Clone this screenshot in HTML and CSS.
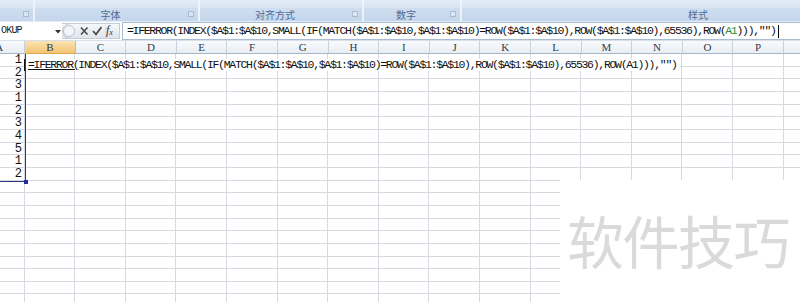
FILE: index.html
```html
<!DOCTYPE html>
<html>
<head>
<meta charset="utf-8">
<link rel="stylesheet" href="styles.css">
</head>
<body>
<div class="ribbon">
  <div class="grp g0"><div class="grp-top"></div><div class="grp-label"><i class="launch"></i></div></div>
  <div class="grp g1"><div class="grp-top"></div><div class="grp-label">字体<i class="launch"></i></div></div>
  <div class="grp g2"><div class="grp-top"></div><div class="grp-label">对齐方式<i class="launch"></i></div></div>
  <div class="grp g3"><div class="grp-top"></div><div class="grp-label">数字<i class="launch"></i></div></div>
  <div class="grp g4"><div class="grp-top"></div><div class="grp-label">样式</div></div>
</div>
<div class="fbar">
  <div class="namebox">
    <span class="nb-text">OKUP</span>
    <svg class="nb-arrow" width="6" height="4" viewBox="0 0 6 4"><path d="M0 0H6L3 3.5Z" fill="#333"/></svg>
  </div>
  <div class="fbtns">
    <svg width="44" height="18" viewBox="0 0 44 18">
      <defs><linearGradient id="pg" x1="0" y1="0" x2="0" y2="1"><stop offset="0" stop-color="#f6f8fb"/><stop offset="1" stop-color="#dfe5ed"/></linearGradient></defs>
      <path d="M8 1.5H44V16.5H8A7.5 7.5 0 0 1 8 1.5Z" fill="url(#pg)" stroke="#c3ccd8"/>
      <circle cx="7" cy="9" r="5.5" fill="#f3f5f8" stroke="#bac4d1"/>
      <path d="M19 5.5L25.5 12.5M25.5 5.5L19 12.5" stroke="#4a4a4a" stroke-width="1.6"/>
      <path d="M31 9L34 12.3L39.5 5" fill="none" stroke="#4a4a4a" stroke-width="1.7"/>
    </svg>
    <span class="fx">f<sub>x</sub></span>
  </div>
  <div class="finput"><span class="ftext">=IFERROR(INDEX($A$1:$A$10,SMALL(IF(MATCH($A$1:$A$10,$A$1:$A$10)=ROW($A$1:$A$10),ROW($A$1:$A$10),65536),ROW(<span class="ref">A1</span>))),"")</span><i class="caret"></i></div>
</div>
<div class="sheet">
  <div class="colheads">
    <div class="ch">A</div><div class="ch sel">B</div><div class="ch">C</div><div class="ch">D</div><div class="ch">E</div><div class="ch">F</div><div class="ch">G</div><div class="ch">H</div><div class="ch">I</div><div class="ch">J</div><div class="ch">K</div><div class="ch">L</div><div class="ch">M</div><div class="ch">N</div><div class="ch">O</div><div class="ch">P</div><div class="ch"></div>
  </div>
  <div class="rows">
    <div class="row"><div class="a">1</div><div class="b"><span class="ctext"><u>=IFERROR(</u>INDEX($A$1:$A$10,SMALL(IF(MATCH($A$1:$A$10,$A$1:$A$10)=ROW($A$1:$A$10),ROW($A$1:$A$10),65536),ROW(A1))),"")</span></div></div>
    <div class="row"><div class="a">2</div></div>
    <div class="row"><div class="a">3</div></div>
    <div class="row"><div class="a">1</div></div>
    <div class="row"><div class="a">2</div></div>
    <div class="row"><div class="a">3</div></div>
    <div class="row"><div class="a">4</div></div>
    <div class="row"><div class="a">5</div></div>
    <div class="row"><div class="a">1</div></div>
    <div class="row"><div class="a">2</div></div>
    <div class="row"></div>
    <div class="row"></div>
    <div class="row"></div>
    <div class="row"></div>
    <div class="row"></div>
    <div class="row"></div>
    <div class="row"></div>
    <div class="row"></div>
    <div class="row"></div>
    <div class="row"></div>
  </div>
  <div class="refbox"><i class="handle"></i></div>
</div>
<div class="watermark">软件技巧</div>
</body>
</html>
```
FILE: styles.css
```css
* { box-sizing: border-box; margin: 0; padding: 0; }
html, body { width: 800px; height: 302px; }
body {
  overflow: hidden;
  background: #fff;
  position: relative;
  font-family: "Liberation Sans", sans-serif;
}

/* ribbon */
.ribbon {
  display: flex;
  height: 22px;
  border-bottom: 1px solid #e4ebf4;
  background: #edf2f9;
  overflow: hidden;
}
.grp {
  flex: none;
  display: flex;
  flex-direction: column;
  border-right: 2px solid #eef3fa;
}
.g0 { width: 35px; }
.g1 { width: 165px; }
.g2 { width: 164px; }
.g3 { width: 98px; }
.g4 { width: 462px; border-right: 0; }
.grp-top {
  height: 8px;
  background: linear-gradient(#e3ecf8, #d8e4f3);
}
.grp-label {
  position: relative;
  height: 13px;
  padding-right: 12px;
  display: flex;
  align-items: center;
  justify-content: center;
  background: linear-gradient(#cfdef0, #c4d6ec);
  font: 10px/13px "Noto Sans CJK SC", sans-serif;
  color: #4b6b96;
}
.g4 .grp-label { padding-right: 0; padding-left: 10px; }
.launch {
  position: absolute;
  right: 4px;
  top: 3px;
  width: 6px;
  height: 6px;
  border: 1px solid #a9bcd4;
  background: #dbe6f3;
}

/* formula bar */
.fbar {
  display: flex;
  height: 19px;
  border-bottom: 1px solid #d6dfea;
  background: #fff;
}
.namebox {
  position: relative;
  width: 61px;
  flex: none;
  overflow: hidden;
  padding-left: 1px;
  font: 10px/18px "Liberation Mono", monospace;
  color: #222;
}
.nb-text { letter-spacing: -0.8px; }
.nb-arrow { position: absolute; left: 55px; top: 8px; }
.fbtns {
  position: relative;
  width: 58px;
  flex: none;
  margin-left: 1px;
  display: flex;
  align-items: center;
  background: linear-gradient(#f6f8fb, #dfe5ed);
  border-top: 1px solid #c3ccd8;
  border-bottom: 1px solid #c3ccd8;
  border-right: 1px solid #c3ccd8;
  height: 16px;
  margin-top: 1px;
  background-clip: padding-box;
}
.fbtns svg { margin-top: -1px; margin-bottom: -1px; flex: none; }
.fx {
  margin-left: 0;
  font: italic 12px/14px "Liberation Serif", serif;
  color: #333;
}
.fx sub { font-size: 8px; vertical-align: -1px; }
.finput {
  flex: 1;
  margin-left: 2px;
  border: 1px solid #a7bbd2;
  border-right: 0;
  display: flex;
  align-items: center;
  padding-left: 4px;
  white-space: nowrap;
  overflow: hidden;
}
.ftext, .ctext {
  font: 11.5px/12px "Liberation Mono", monospace;
  letter-spacing: -1.31px;
  color: #111;
}
.ref { color: #2e8b2e; }
.caret {
  width: 1px;
  height: 13px;
  background: #000;
  margin-left: 2px;
}

/* sheet */
.sheet {
  position: relative;
  margin-left: -25.6px;
  width: 860.2px;
}
.colheads {
  display: flex;
  height: 13px;
}
.ch {
  flex: none;
  width: 50.6px;
  border-right: 1px solid #c6cfdb;
  border-bottom: 1px solid #a6b6c9;
  background: linear-gradient(#f8fafc, #e9eef4);
  font: 11px/12px "Liberation Serif", serif;
  color: #2f3a48;
  text-align: center;
}
.ch.sel {
  background: linear-gradient(#fbe3b4, #f3c472);
  border-bottom-color: #e0a44a;
  border-right-color: #e3b26b;
}
.row {
  display: flex;
  height: 12.667px;
  border-bottom: 1px solid #d5dae2;
  background: repeating-linear-gradient(90deg, transparent 0 49.6px, #d5dae2 49.6px 50.6px);
}
.a {
  flex: none;
  width: 50.6px;
  padding-right: 3px;
  text-align: right;
  font: 12px/12px "Liberation Mono", monospace;
  color: #111;
}
.b {
  flex: none;
  white-space: nowrap;
  position: relative;
}
.ctext {
  display: inline-block;
  background: #fff;
  padding: 0 3px 0 2px;
  margin-left: -1px;
  border-left: 2px solid #111;
  height: 12px;
}
.ctext u { text-decoration-thickness: 1px; text-underline-offset: 1px; }
.refbox {
  position: absolute;
  left: -2px;
  top: 13px;
  width: 53.6px;
  height: 127.7px;
  border-right: 1.5px solid #2d3583;
  border-bottom: 1.5px solid #2d3583;
}
.handle {
  position: absolute;
  right: -3px;
  bottom: -3px;
  width: 4px;
  height: 4px;
  background: #1f2c9c;
}

/* watermark */
.watermark {
  position: absolute;
  left: 560px;
  top: 180px;
  width: 240px;
  height: 122px;
  background: #fff;
  padding: 31px 0 0 7px;
  font: 57px/57px "Noto Sans CJK SC", sans-serif;
  letter-spacing: -1.5px;
  color: #dadada;
  white-space: nowrap;
}
```
